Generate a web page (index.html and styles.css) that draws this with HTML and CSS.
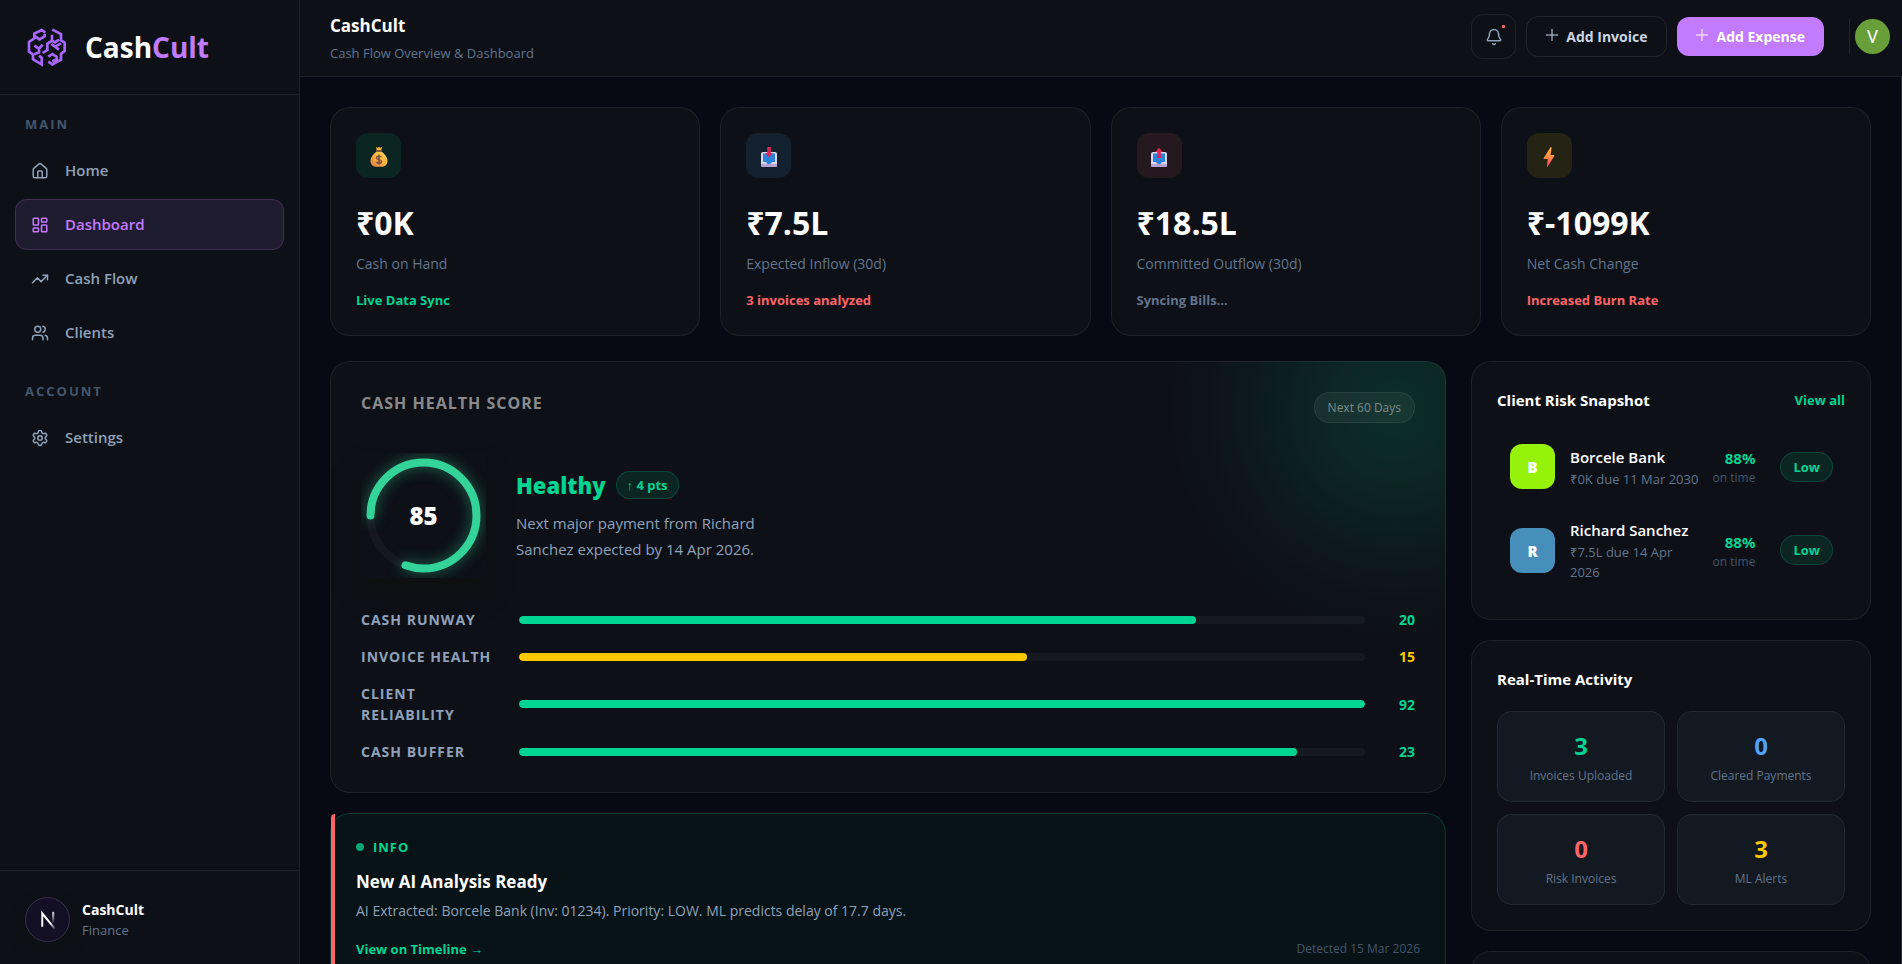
FILE: index.html
```html
<!DOCTYPE html>
<html lang="en">
<head>
<meta charset="utf-8">
<title>CashCult</title>
<meta name="viewport" content="width=device-width, initial-scale=1">
<link rel="stylesheet" href="styles.css">
</head>
<body>
<div class="app">
  <aside class="sidebar">
    <div class="brand">
      <svg class="brand-mark" viewBox="0 0 120 120" aria-hidden="true">
        <path d="M55 17 44 9 22 20v14L6 45v29l12 9v14l26 15V92l-8-6M22 27l16 10 15-9v-7M22 56l14 9 11-12M36 65v11l-14 6M47 78l14-9V50l14-9V23M76 8l26 13v19l11 7v25l-11 8v18l-26 14-12-8M75 41l9 5 12-8M102 49 84 59l-11-8M84 59l12 9M64 89l12-8 13 8v8l-13 6"/>
      </svg>
      <span class="brand-name">Cash<span class="brand-accent">Cult</span></span>
    </div>
    <nav class="nav">
      <h2 class="nav-title">MAIN</h2>
      <a class="nav-item" href="#home">
        <svg class="icon" viewBox="0 0 24 24" aria-hidden="true"><path d="M15 21v-8a1 1 0 0 0-1-1h-4a1 1 0 0 0-1 1v8"/><path d="M3 10a2 2 0 0 1 .709-1.528l7-5.999a2 2 0 0 1 2.582 0l7 5.999A2 2 0 0 1 21 10v9a2 2 0 0 1-2 2H5a2 2 0 0 1-2-2z"/></svg>
        Home</a>
      <a class="nav-item nav-item-active" href="#dashboard">
        <svg class="icon" viewBox="0 0 24 24" aria-hidden="true"><rect width="7" height="9" x="3" y="3" rx="1"/><rect width="7" height="5" x="14" y="3" rx="1"/><rect width="7" height="9" x="14" y="12" rx="1"/><rect width="7" height="5" x="3" y="16" rx="1"/></svg>
        Dashboard</a>
      <a class="nav-item" href="#cashflow">
        <svg class="icon" viewBox="0 0 24 24" aria-hidden="true"><path d="M16 7h6v6"/><path d="m22 7-8.5 8.5-5-5L2 17"/></svg>
        Cash Flow</a>
      <a class="nav-item" href="#clients">
        <svg class="icon" viewBox="0 0 24 24" aria-hidden="true"><path d="M16 21v-2a4 4 0 0 0-4-4H6a4 4 0 0 0-4 4v2"/><circle cx="9" cy="7" r="4"/><path d="M22 21v-2a4 4 0 0 0-3-3.87"/><path d="M16 3.13a4 4 0 0 1 0 7.75"/></svg>
        Clients</a>
      <h2 class="nav-title">ACCOUNT</h2>
      <a class="nav-item" href="#settings">
        <svg class="icon" viewBox="0 0 24 24" aria-hidden="true"><path d="M9.671 4.136a2.34 2.34 0 0 1 4.659 0 2.34 2.34 0 0 0 3.319 1.915 2.34 2.34 0 0 1 2.33 4.033 2.34 2.34 0 0 0 0 3.831 2.34 2.34 0 0 1-2.33 4.033 2.34 2.34 0 0 0-3.319 1.915 2.34 2.34 0 0 1-4.659 0 2.34 2.34 0 0 0-3.32-1.915 2.34 2.34 0 0 1-2.33-4.033 2.34 2.34 0 0 0 0-3.831A2.34 2.34 0 0 1 6.35 6.051a2.34 2.34 0 0 0 3.319-1.915"/><circle cx="12" cy="12" r="3"/></svg>
        Settings</a>
    </nav>
    <div class="account">
      <span class="account-badge">
        <svg viewBox="0 0 45 45" aria-hidden="true">
          <defs>
            <linearGradient id="fadeA" gradientUnits="userSpaceOnUse" x1="16" y1="15" x2="30" y2="33"><stop offset=".65" stop-color="#fff"/><stop offset="1" stop-color="#fff" stop-opacity=".1"/></linearGradient>
            <linearGradient id="fadeB" gradientUnits="userSpaceOnUse" x1="28" y1="15" x2="28" y2="26"><stop offset="0" stop-color="#fff"/><stop offset="1" stop-color="#fff" stop-opacity=".1"/></linearGradient>
          </defs>
          <path d="M17 30V16L30 32" fill="none" stroke="url(#fadeA)" stroke-width="2"/>
          <path d="M28 15h1v11h-1z" fill="none" stroke="url(#fadeB)"/>
        </svg>
      </span>
      <div>
        <p class="account-name">CashCult</p>
        <p class="account-role">Finance</p>
      </div>
    </div>
  </aside>

  <div class="main">
    <header class="topbar">
      <div class="topbar-titles">
        <h1 class="page-title">CashCult</h1>
        <p class="page-sub">Cash Flow Overview &amp; Dashboard</p>
      </div>
      <div class="actions">
        <button class="bell" type="button" aria-label="Notifications">
          <svg class="icon" viewBox="0 0 24 24" aria-hidden="true"><path d="M10.268 21a2 2 0 0 0 3.464 0"/><path d="M3.262 15.326A1 1 0 0 0 4 17h16a1 1 0 0 0 .74-1.673C19.41 13.956 18 12.499 18 8A6 6 0 0 0 6 8c0 4.499-1.411 5.956-2.738 7.326"/></svg>
          <span class="bell-dot"></span>
        </button>
        <button class="btn btn-outline" type="button"><svg class="plus" viewBox="0 0 12 12" aria-hidden="true"><path d="M6 0v12M0 6h12"/></svg>Add Invoice</button>
        <button class="btn btn-primary" type="button"><svg class="plus" viewBox="0 0 12 12" aria-hidden="true"><path d="M6 0v12M0 6h12"/></svg>Add Expense</button>
        <div class="user"><button class="user-avatar" type="button">V</button></div>
      </div>
    </header>

    <main class="content">
      <section class="stats">
        <article class="card stat">
          <span class="stat-icon tint-green">
            <svg viewBox="0 0 20 20" aria-hidden="true">
              <defs><linearGradient id="bag" x1="1" y1="0" x2="0" y2="1"><stop offset="0" stop-color="#ffdf5a"/><stop offset=".5" stop-color="#f9b03c"/><stop offset="1" stop-color="#e07a45"/></linearGradient></defs>
              <path d="M7 0l1.600.8L10 0l1.400.8L13 0l-.7 3H7.700z" fill="#f4b23c"/>
              <path d="M7.500 4.500h5c3 2.500 6 5.500 6 9.500 0 4-3 5.800-6 5.800h-5c-3 0-6-1.800-6-5.800 0-4 3-7 6-9.500z" fill="url(#bag)"/>
              <rect x="7" y="3" width="6" height="1.800" rx=".9" fill="#8c5543"/>
              <path d="M12.400 10.300c-.4-.9-1.300-1.200-2.400-1.200-1.400 0-2.400.6-2.400 1.700 0 2.500 4.900 1.100 4.900 3.700 0 1.200-1.100 1.800-2.500 1.800-1.300 0-2.300-.5-2.600-1.500M10 7.600v10.200" fill="none" stroke="#7d4a45" stroke-width="1.400"/>
            </svg>
          </span>
          <p class="stat-value">₹0K</p>
          <p class="stat-label">Cash on Hand</p>
          <p class="stat-note green">Live Data Sync</p>
        </article>
        <article class="card stat">
          <span class="stat-icon tint-blue">
            <svg viewBox="0 0 20 20" aria-hidden="true">
              <rect x="2" y="5" width="16" height="15" rx="2" fill="#ddd5ea"/><path d="M2 17h16v1.500a1.500 1.500 0 0 1-1.500 1.500h-13A1.500 1.500 0 0 1 2 18.500z" fill="#b9a3d6"/>
              <path d="M4 6.500h12V15h-3l-1.500 2h-3L7 15H4z" fill="#2b82d9"/><path d="M8.200 0h3.600v6h2L10 10.500 6.200 6h2z" fill="#dc2458"/>
            </svg>
          </span>
          <p class="stat-value">₹7.5L</p>
          <p class="stat-label">Expected Inflow (30d)</p>
          <p class="stat-note red">3 invoices analyzed</p>
        </article>
        <article class="card stat">
          <span class="stat-icon tint-red">
            <svg viewBox="0 0 20 20" aria-hidden="true">
              <rect x="2" y="5" width="16" height="15" rx="2" fill="#ddd5ea"/><path d="M2 17h16v1.500a1.500 1.500 0 0 1-1.500 1.500h-13A1.500 1.500 0 0 1 2 18.500z" fill="#b9a3d6"/>
              <path d="M4 6.500h12V15h-3l-1.500 2h-3L7 15H4z" fill="#2b82d9"/><path d="M8.200 11h3.600V5h2L10 .8 6.200 5h2z" fill="#dc2458"/>
            </svg>
          </span>
          <p class="stat-value">₹18.5L</p>
          <p class="stat-label">Committed Outflow (30d)</p>
          <p class="stat-note slate">Syncing Bills...</p>
        </article>
        <article class="card stat">
          <span class="stat-icon tint-amber">
            <svg viewBox="0 0 20 20" aria-hidden="true">
              <defs><linearGradient id="bolt" x1="0" y1="0" x2="0" y2="1"><stop offset="0" stop-color="#ffb13d"/><stop offset=".5" stop-color="#ff9142"/><stop offset="1" stop-color="#f8355a"/></linearGradient></defs>
              <path d="M11.500.3 4.600 11.200c-.2.400 0 .8.500.8h3.700L7.800 19c-.1.800.6 1 1 .4l6.500-10.500c.2-.4 0-.8-.5-.8h-3.200l1-7.300c.1-.800-.7-1.100-1.100-.5z" fill="url(#bolt)"/>
            </svg>
          </span>
          <p class="stat-value">₹-1099K</p>
          <p class="stat-label">Net Cash Change</p>
          <p class="stat-note red">Increased Burn Rate</p>
        </article>
      </section>

      <div class="columns">
        <div class="stack">
          <section class="card health">
            <div class="health-head">
              <h2 class="health-title">CASH HEALTH SCORE</h2>
              <span class="period">Next 60 Days</span>
            </div>
            <div class="health-body">
              <div class="ring">
                <svg viewBox="0 0 125 125" aria-hidden="true">
                  <circle class="ring-track" cx="62.500" cy="62.500" r="53"/>
                  <circle class="ring-value" cx="62.500" cy="62.500" r="53" pathLength="360" transform="rotate(180 62.500 62.500)"/>
                </svg>
                <span class="ring-score">85</span>
              </div>
              <div class="health-info">
                <div class="health-status"><strong class="status-word">Healthy</strong><span class="delta">↑ 4 pts</span></div>
                <p class="health-text">Next major payment from Richard Sanchez expected by 14 Apr 2026.</p>
              </div>
            </div>
            <div class="meters">
              <div class="meter"><span class="meter-label">CASH RUNWAY</span><span class="meter-track"><span class="meter-fill" style="width:80%"></span></span><span class="meter-value green">20</span></div>
              <div class="meter"><span class="meter-label">INVOICE HEALTH</span><span class="meter-track"><span class="meter-fill fill-amber" style="width:60%"></span></span><span class="meter-value amber">15</span></div>
              <div class="meter"><span class="meter-label">CLIENT RELIABILITY</span><span class="meter-track"><span class="meter-fill" style="width:100%"></span></span><span class="meter-value green">92</span></div>
              <div class="meter"><span class="meter-label">CASH BUFFER</span><span class="meter-track"><span class="meter-fill" style="width:92%"></span></span><span class="meter-value green">23</span></div>
            </div>
          </section>

          <section class="alert">
            <p class="alert-kind"><span class="alert-dot"></span>INFO</p>
            <h3 class="alert-title">New AI Analysis Ready</h3>
            <p class="alert-text">AI Extracted: Borcele Bank (Inv: 01234). Priority: LOW. ML predicts delay of 17.7 days.</p>
            <div class="alert-foot">
              <a class="link" href="#timeline">View on Timeline →</a>
              <span class="alert-date">Detected 15 Mar 2026</span>
            </div>
          </section>
        </div>

        <div class="stack">
          <section class="card panel">
            <div class="panel-head">
              <h2 class="panel-title">Client Risk Snapshot</h2>
              <a class="link" href="#clients">View all</a>
            </div>
            <ul class="clients">
              <li class="client">
                <span class="client-avatar avatar-lime">B</span>
                <div class="client-info"><p class="client-name">Borcele Bank</p><p class="client-due">₹0K due 11 Mar 2030</p></div>
                <div class="client-rate"><p class="rate">88%</p><p class="rate-label">on time</p></div>
                <span class="risk">Low</span>
              </li>
              <li class="client">
                <span class="client-avatar avatar-blue">R</span>
                <div class="client-info"><p class="client-name">Richard Sanchez</p><p class="client-due">₹7.5L due 14 Apr 2026</p></div>
                <div class="client-rate"><p class="rate">88%</p><p class="rate-label">on time</p></div>
                <span class="risk">Low</span>
              </li>
            </ul>
          </section>

          <section class="card panel">
            <div class="panel-head"><h2 class="panel-title">Real-Time Activity</h2></div>
            <div class="tiles">
              <div class="tile"><p class="tile-value green">3</p><p class="tile-label">Invoices Uploaded</p></div>
              <div class="tile"><p class="tile-value blue">0</p><p class="tile-label">Cleared Payments</p></div>
              <div class="tile"><p class="tile-value red">0</p><p class="tile-label">Risk Invoices</p></div>
              <div class="tile"><p class="tile-value amber">3</p><p class="tile-label">ML Alerts</p></div>
            </div>
          </section>

          <section class="card panel"></section>
        </div>
      </div>
    </main>
  </div>
</div>
</body>
</html>
```
FILE: styles.css
```css
:root {
  --bg: #070a12;
  --surface: #0d1117;
  --line: rgba(255, 255, 255, 0.07);
  --green: #00d492;
  --red: #ff6467;
  --amber: #fcc800;
  --blue: #51a2ff;
  --purple: #c27aff;
  --slate-300: #cad5e2;
  --slate-400: #90a1b9;
  --slate-500: #62748e;
  --slate-600: #45556c;
}

* { box-sizing: border-box; }

body {
  margin: 0;
  background: var(--bg);
  color: #fff;
  font-family: "Open Sans", "Noto Sans", sans-serif;
  font-size: 14px;
  line-height: 20px;
}

h1, h2, h3, p, ul { margin: 0; padding: 0; }
ul { list-style: none; }
a { text-decoration: none; color: inherit; }
button { font: inherit; color: inherit; cursor: pointer; padding: 0; }

.green { color: var(--green); }
.red { color: var(--red); }
.amber { color: var(--amber); }
.blue { color: var(--blue); }
.slate { color: var(--slate-500); }

.icon {
  width: 18px;
  height: 18px;
  fill: none;
  stroke: currentColor;
  stroke-width: 2;
  stroke-linecap: round;
  stroke-linejoin: round;
  flex: none;
}

.app {
  display: grid;
  grid-template-columns: 300px minmax(0, 1fr);
  height: 100vh;
  overflow: hidden;
}

/* Sidebar */
.sidebar {
  display: flex;
  flex-direction: column;
  background: var(--surface);
  border-right: 1px solid var(--line);
}

.brand {
  display: flex;
  align-items: center;
  gap: 18px;
  padding: 25px 27px;
  border-bottom: 1px solid var(--line);
}
.brand-mark {
  width: 40px;
  height: 40px;
  margin: 2px 0;
  fill: none;
  stroke: #a966ff;
  stroke-width: 8;
}
.brand-name { font-size: 28px; font-weight: 700; line-height: 44px; }
.brand-accent { color: var(--purple); }

.nav {
  flex: 1;
  display: flex;
  flex-direction: column;
  gap: 3px;
  padding: 19px 15px;
}
.nav-title {
  padding: 0 10px;
  margin-bottom: 8px;
  font-size: 13px;
  font-weight: 700;
  letter-spacing: 2px;
  color: var(--slate-600);
}
.nav-item + .nav-title { margin-top: 20px; }
.nav-item {
  display: flex;
  align-items: center;
  gap: 16px;
  padding: 14px 15px;
  border: 1px solid transparent;
  border-radius: 12px;
  font-size: 15px;
  font-weight: 600;
  line-height: 21px;
  color: var(--slate-400);
}
.nav-item-active {
  color: var(--purple);
  background: rgba(194, 122, 255, 0.11);
  border-color: rgba(194, 122, 255, 0.2);
}

.account {
  display: flex;
  align-items: center;
  gap: 12px;
  padding: 26px 25px 22px;
  border-top: 1px solid var(--line);
}
.account-badge {
  width: 45px;
  height: 45px;
  border: 1px solid #3b2f4d;
  border-radius: 50%;
  background: #130f24;
  box-shadow: 0 8px 16px rgba(16, 16, 16, 0.5);
}
.account-name { font-size: 14px; font-weight: 700; }
.account-role { font-size: 13px; color: var(--slate-500); }

/* Top bar */
.main {
  display: flex;
  flex-direction: column;
  min-width: 0;
  min-height: 0;
}
.topbar {
  display: flex;
  align-items: center;
  justify-content: space-between;
  padding: 11px 12px 11px 30px;
  background: var(--surface);
  border-bottom: 1px solid var(--line);
}
.page-title { font-size: 17px; font-weight: 700; line-height: 30px; }
.page-sub { font-size: 13px; line-height: 24px; color: var(--slate-500); }
.actions { display: flex; align-items: center; gap: 10px; padding-bottom: 3px; }
.bell {
  position: relative;
  display: grid;
  place-items: center;
  width: 45px;
  height: 45px;
  border: 1px solid var(--line);
  border-radius: 12px;
  background: transparent;
  color: var(--slate-400);
}
.bell .icon { stroke-width: 2; }
.bell-dot {
  position: absolute;
  top: 10px;
  right: 10px;
  width: 3px;
  height: 3px;
  border-radius: 1px;
  background: var(--red);
}
.btn {
  display: flex;
  align-items: center;
  gap: 8px;
  padding: 9px 19px;
  border-radius: 12px;
  font-size: 14px;
  font-weight: 700;
  line-height: 21px;
}
.btn-outline {
  background: transparent;
  border: 1px solid rgba(255, 255, 255, 0.09);
  color: var(--slate-300);
}
.btn-primary { border: 0; background: var(--purple); color: #fff; }
.plus {
  width: 12px;
  height: 12px;
  margin-bottom: 3px;
  fill: none;
  stroke: currentColor;
}
.user {
  margin-left: 15px;
  padding-left: 5px;
  border-left: 1px solid rgba(255, 255, 255, 0.09);
}
.user-avatar {
  display: block;
  width: 35px;
  height: 35px;
  border: 0;
  border-radius: 50%;
  background: #689f38;
  font-family: Roboto, sans-serif;
  font-size: 18px;
  line-height: 35px;
}

/* Content */
.content {
  flex: 1;
  min-height: 0;
  padding: 30px;
  overflow-y: auto;
  scrollbar-width: none;
  border-right: 1px solid #2b2c2f;
}
.card {
  background: var(--surface);
  border: 1px solid var(--line);
  border-radius: 20px;
}
.stats {
  display: grid;
  grid-template-columns: repeat(4, minmax(0, 1fr));
  gap: 20px;
  margin-bottom: 25px;
}
.stat { padding: 25px; }
.stat-icon {
  display: grid;
  place-items: center;
  width: 45px;
  height: 45px;
  border-radius: 12px;
}
.stat-icon svg { width: 20px; height: 20px; margin-top: 2px; }
.tint-green { background: rgba(0, 212, 146, 0.1); }
.tint-blue { background: rgba(81, 162, 255, 0.1); }
.tint-red { background: rgba(255, 100, 103, 0.1); }
.tint-amber { background: rgba(252, 200, 0, 0.1); }
.stat-value { margin-top: 21px; font-size: 32px; font-weight: 700; line-height: 48px; }
.stat-label { margin-top: 6px; font-size: 14px; line-height: 22px; color: var(--slate-500); }
.stat-note { margin-top: 15px; font-size: 13px; font-weight: 700; }

.columns {
  display: grid;
  grid-template-columns: minmax(0, 1fr) 400px;
  align-items: start;
  gap: 25px;
}
.stack { display: grid; gap: 20px; }

/* Health card */
.health {
  padding: 30px;
  background:
    radial-gradient(circle 230px at right 50px top 49px,
      rgba(0, 212, 146, 0.15) 0%,
      rgba(0, 212, 146, 0.11) 30%,
      rgba(0, 212, 146, 0.05) 60%,
      rgba(0, 212, 146, 0.01) 85%,
      transparent 100%) border-box,
    var(--surface);
}
.health-head { display: flex; justify-content: space-between; align-items: flex-start; }
.health-title {
  font-size: 16px;
  font-weight: 700;
  letter-spacing: 1px;
  line-height: 22px;
  color: #8a8a8c;
}
.period {
  padding: 5px 13px;
  border: 1px solid var(--line);
  border-radius: 16px;
  background: rgba(255, 255, 255, 0.05);
  font-size: 12px;
  line-height: 19px;
  color: #7b8d8c;
}
.health-body { display: flex; align-items: center; gap: 30px; margin-top: 30px; }
.ring { display: grid; place-items: center; flex: none; }
.ring > * { grid-area: 1 / 1; }
.ring svg {
  width: 125px;
  height: 125px;
  overflow: hidden;
  box-shadow: 0 16px 20px rgba(14, 16, 17, 0.8);
}
.ring circle { fill: none; stroke-width: 8; }
.ring-track { stroke: #15191f; }
.ring-value {
  stroke: #34d399;
  stroke-linecap: round;
  stroke-dasharray: 290 360;
  filter: drop-shadow(0 0 7px rgba(52, 211, 153, 0.5));
}
.ring-score { font-size: 24px; font-weight: 800; }
.health-status { display: flex; align-items: center; gap: 10px; }
.status-word { font-size: 22px; font-weight: 800; line-height: 32px; color: var(--green); }
.delta,
.risk {
  border: 1px solid rgba(0, 212, 146, 0.2);
  border-radius: 16px;
  background: rgba(0, 212, 146, 0.1);
  color: var(--green);
  font-size: 13px;
  font-weight: 700;
}
.delta { padding: 3px 10px; }
.health-text {
  max-width: 260px;
  margin-top: 9px;
  font-size: 15px;
  line-height: 26px;
  color: var(--slate-400);
}
.meters { display: grid; gap: 16px; margin-top: 31px; }
.meter {
  display: grid;
  grid-template-columns: 138px minmax(0, 1fr) 30px;
  align-items: center;
  gap: 20px;
}
.meter-label {
  font-size: 14px;
  font-weight: 700;
  letter-spacing: 1px;
  line-height: 21px;
  color: var(--slate-400);
}
.meter-track {
  height: 8px;
  border-radius: 4px;
  background: rgba(255, 255, 255, 0.04);
  overflow: hidden;
}
.meter-fill { display: block; height: 100%; border-radius: 4px; background: var(--green); }
.fill-amber { background: var(--amber); }
.meter-value { font-size: 14px; font-weight: 700; line-height: 21px; text-align: right; }

/* Alert */
.alert {
  position: relative;
  padding: 23px 25px;
  border: 1px solid rgba(0, 212, 146, 0.2);
  border-radius: 20px;
  background: #071317;
}
.alert::before {
  content: "";
  position: absolute;
  inset: 0 auto 0 0;
  width: 4px;
  border-radius: 4px 0 0 4px;
  background: var(--red);
}
.alert-kind {
  display: flex;
  align-items: center;
  gap: 9px;
  font-size: 13px;
  font-weight: 700;
  letter-spacing: 1px;
  color: var(--green);
}
.alert-dot { width: 8px; height: 8px; border-radius: 50%; background: #05a574; }
.alert-title { margin-top: 12px; font-size: 17px; font-weight: 700; line-height: 26px; }
.alert-text { margin-top: 5px; color: var(--slate-400); line-height: 22px; }
.alert-foot { display: flex; justify-content: space-between; margin-top: 17px; }
.alert-date { font-size: 12px; color: var(--slate-600); }
.link { font-size: 13px; font-weight: 700; color: var(--green); }

/* Right panels */
.panel { padding: 25px; }
.panel-head { display: flex; justify-content: space-between; align-items: center; }
.panel-title { font-size: 15px; font-weight: 700; line-height: 26px; }
.clients { display: grid; gap: 5px; margin-top: 19px; }
.client { display: flex; align-items: center; padding: 12px 12px 12px 13px; }
.client-avatar {
  flex: none;
  width: 45px;
  height: 45px;
  border-radius: 12px;
  font-size: 15px;
  font-weight: 800;
  line-height: 46px;
  text-align: center;
}
.avatar-lime { background: #97f20b; }
.avatar-blue { background: #468fbb; }
.client-info { flex: 1; min-width: 0; margin-left: 15px; }
.client-name { font-size: 15px; font-weight: 600; line-height: 24px; }
.client-due { font-size: 13px; color: var(--slate-500); }
.client-rate { flex: none; margin-right: 25px; padding-top: 3px; text-align: right; }
.rate { font-size: 15px; font-weight: 700; color: var(--green); }
.rate-label { font-size: 12px; color: var(--slate-600); }
.risk { padding: 4px 12px; }
.client-info + .client-rate { margin-left: 12px; }

.tiles {
  display: grid;
  grid-template-columns: repeat(2, minmax(0, 1fr));
  gap: 12px;
  margin-top: 19px;
}
.tile {
  padding: 15px 10px;
  border: 1px solid rgba(255, 255, 255, 0.07);
  border-radius: 15px;
  background: #121920;
  text-align: center;
}
.tile-value { font-size: 24px; font-weight: 700; line-height: 37px; }
.tile-label { margin-top: 2px; font-size: 12px; color: var(--slate-500); }
```
